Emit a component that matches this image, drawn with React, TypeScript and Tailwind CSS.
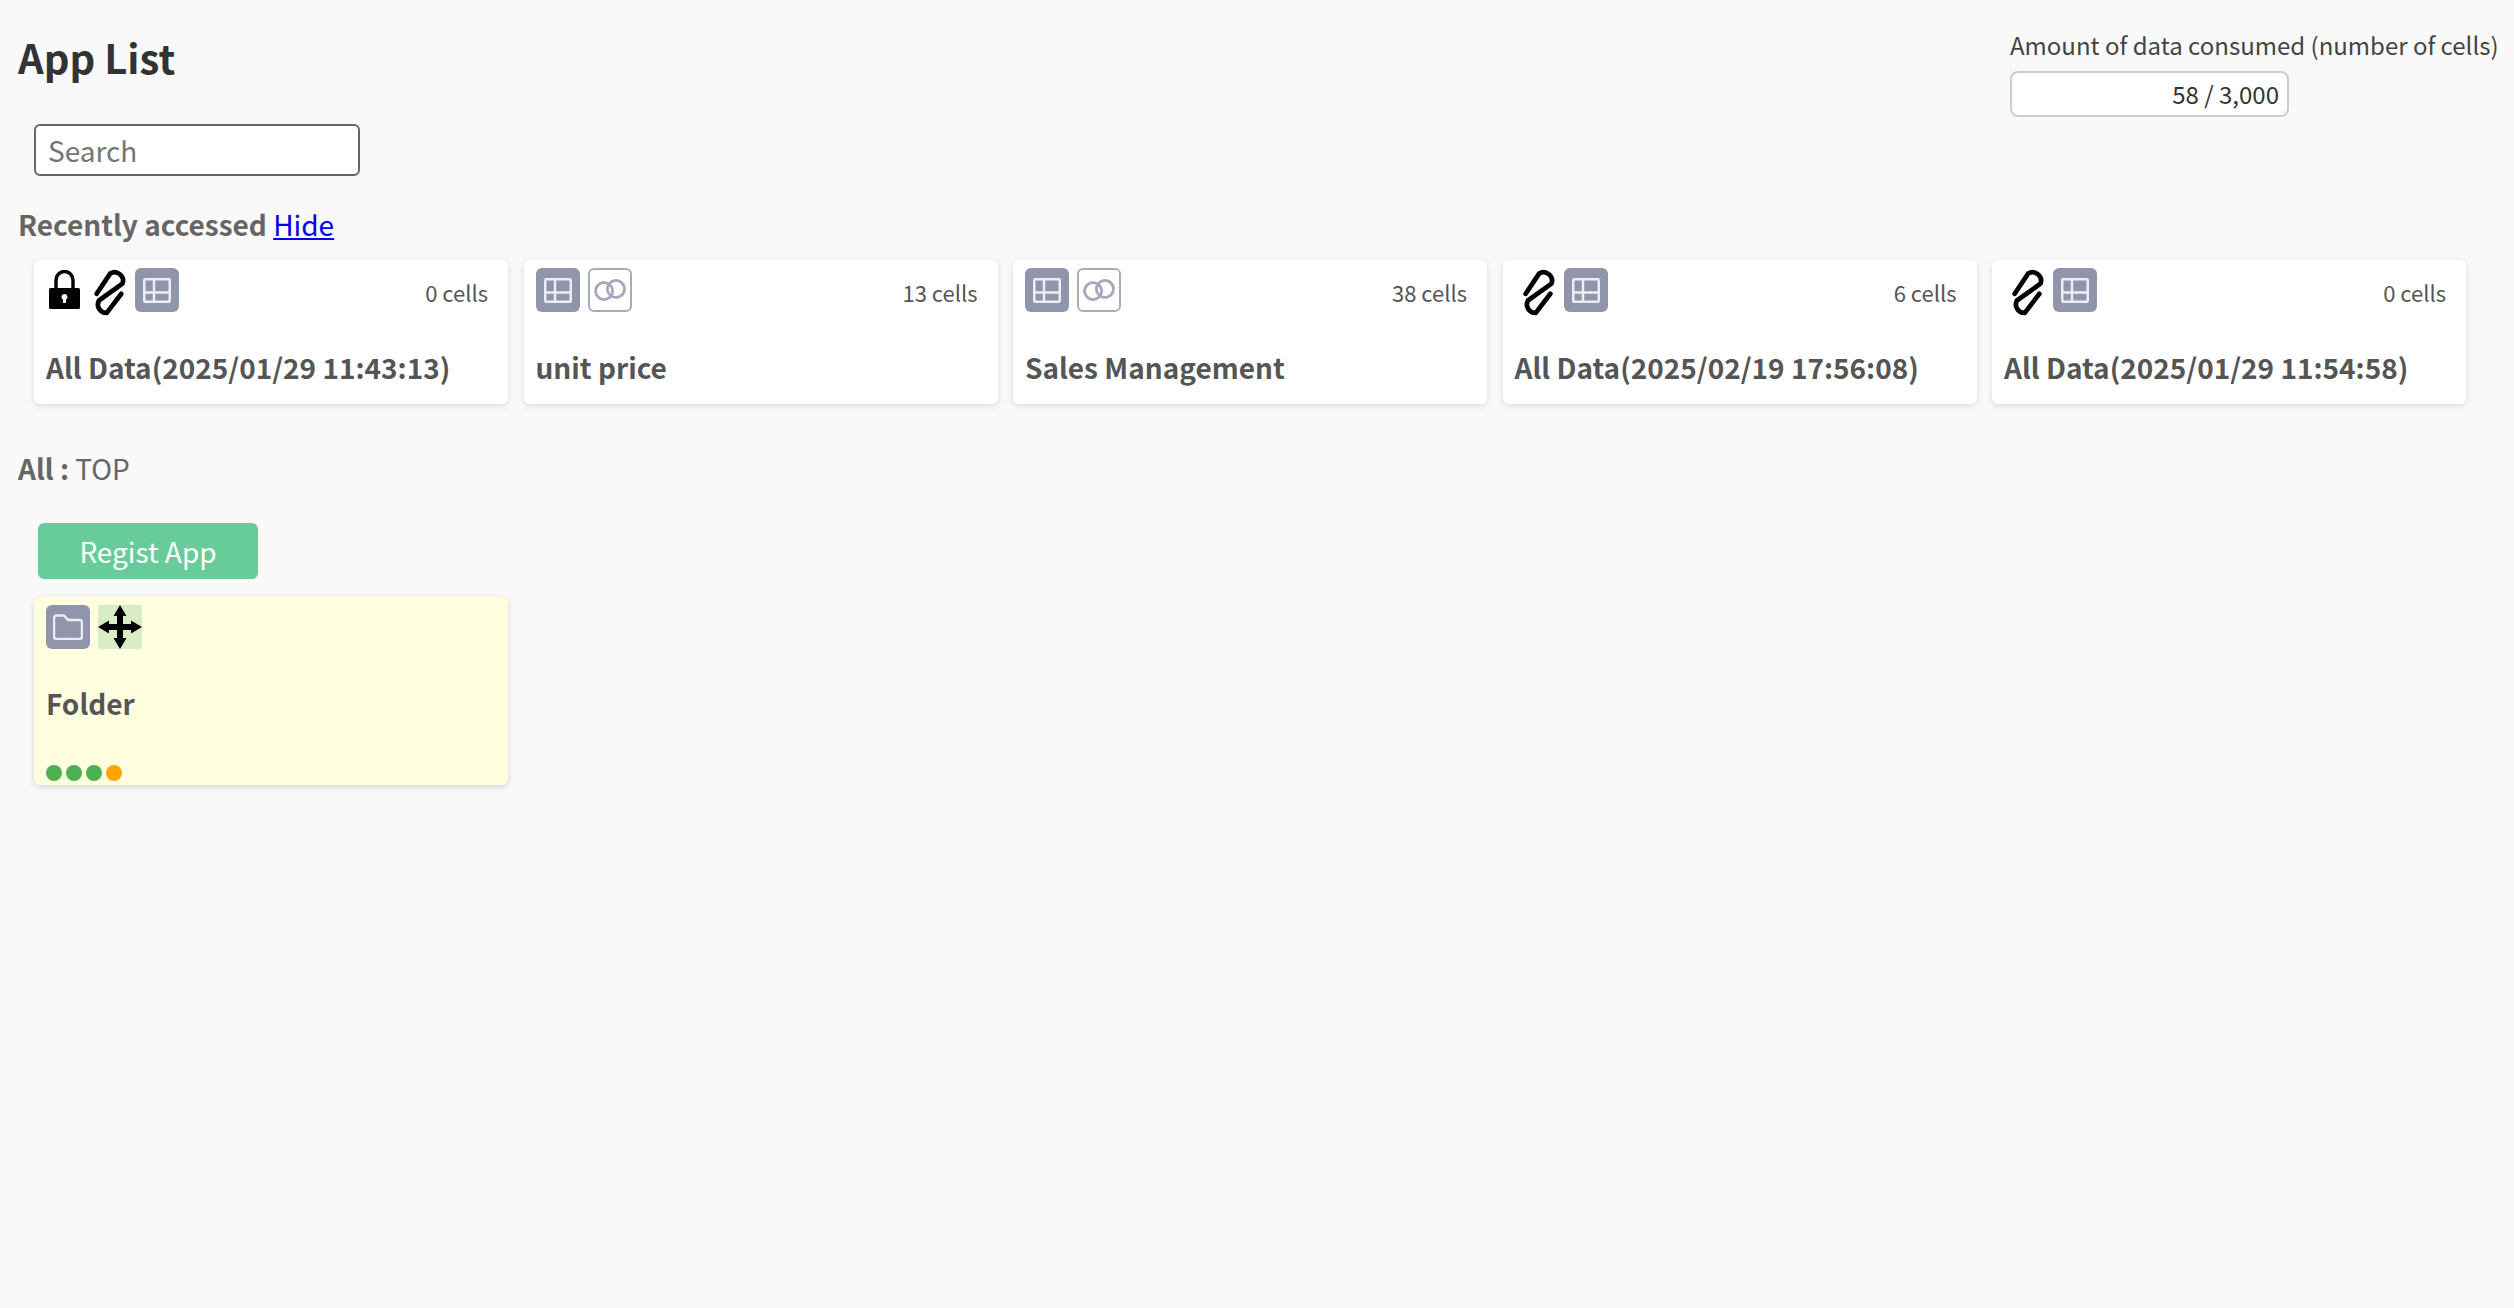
const font = { fontFamily: '"Noto Sans CJK JP", "Noto Sans", sans-serif' };

function Lock() {
  return (
    <svg width="31" height="39" viewBox="0 0 31 39" className="mt-[2px] ml-[3px] mr-[6px] shrink-0">
      <path d="M7 19V10a8.500 8.500 0 0 1 17 0v9" fill="none" stroke="#000" strokeWidth="3.400" />
      <path fillRule="evenodd" d="M1.500 18h28a1.500 1.500 0 0 1 1.500 1.500v18a1.500 1.500 0 0 1-1.500 1.500h-28A1.500 1.500 0 0 1 0 37.500v-18A1.500 1.500 0 0 1 1.500 18zM15.500 24a3 3 0 0 0-1.500 5.600V33h3v-3.400A3 3 0 0 0 15.500 24z" fill="#000" />
    </svg>
  );
}

function Clip() {
  return (
    <svg width="34" height="46" viewBox="9.500 8 29 41" className="ml-[6px] mr-[9px] shrink-0 overflow-visible" fill="none" stroke="#000" strokeWidth="4.200" strokeLinecap="round" strokeLinejoin="round">
      <path d="M13 31 25 13A7.500 7.500 0 0 1 36 22L15 37A7.500 7.500 0 0 0 22 48L35 31" />
    </svg>
  );
}

function TableIcon() {
  return (
    <div className="w-[44px] h-[44px] rounded-[6px] bg-[#9195ab] flex items-center justify-center shrink-0">
      <svg width="28" height="25" viewBox="0 0 28 25" fill="none" stroke="#eceef4" strokeWidth="2.500">
        <rect x="1.250" y="1.250" width="25.500" height="22.500" rx="1" />
        <path d="M11 1v23M1 14.500h26" />
      </svg>
    </div>
  );
}

function Rings() {
  return (
    <div className="ml-[8px] w-[44px] h-[44px] rounded-[6px] border-2 border-[#a9acbc] bg-white flex items-center justify-center shrink-0">
      <svg width="32" height="22" viewBox="0 0 32 22" fill="none" stroke="#a5a8b9" strokeWidth="2.800">
        <g transform="rotate(-10 16 11)">
          <circle cx="10" cy="11" r="8.500" />
          <circle cx="22" cy="11" r="8.500" />
        </g>
      </svg>
    </div>
  );
}

function FolderIcon() {
  return (
    <div className="w-[44px] h-[44px] rounded-[6px] bg-[#9195ab] flex items-center justify-center shrink-0">
      <svg width="30" height="26" viewBox="0 0 30 26" fill="none" stroke="#eceef4" strokeWidth="2.400" strokeLinejoin="round">
        <path d="M3.500 1.500h7.500l4 4.500h11.500A2.500 2.500 0 0 1 29 8.500v14a2.500 2.500 0 0 1-2.500 2.500h-23A2.500 2.500 0 0 1 1 22.500V4a2.500 2.500 0 0 1 2.500-2.500z" />
      </svg>
    </div>
  );
}

function MoveIcon() {
  return (
    <div className="ml-[8px] w-[44px] h-[44px] bg-[#d9ecc8] shrink-0">
      <svg width="44" height="44" viewBox="0 0 44 44" fill="#000">
        <path d="M22 0 28.500 11H25V19H33V15.500L44 22 33 28.500V25H25V33H28.500L22 44 15.500 33H19V25H11V28.500L0 22 11 15.500V19H19V11H15.500Z" />
      </svg>
    </div>
  );
}

type CardData = { title: string; cells: string; lock?: boolean; clip?: boolean; rings?: boolean };

const cards: CardData[] = [
  { title: "All Data(2025/01/29 11:43:13)", cells: "0 cells", lock: true, clip: true },
  { title: "unit price", cells: "13 cells", rings: true },
  { title: "Sales Management", cells: "38 cells", rings: true },
  { title: "All Data(2025/02/19 17:56:08)", cells: "6 cells", clip: true },
  { title: "All Data(2025/01/29 11:54:58)", cells: "0 cells", clip: true },
];

function Card({ c }: { c: CardData }) {
  return (
    <div className="w-[474px] h-[144px] shrink-0 bg-white rounded-[6px] shadow-[0_2px_6px_rgba(0,0,0,0.12)] px-[12px] pt-[8px]">
      <div className="flex items-start h-[44px]">
        {c.lock && <Lock />}
        {c.clip && <Clip />}
        <TableIcon />
        {c.rings && <Rings />}
        <div className="ml-auto mr-[8px] mt-[9px] text-[22px] leading-[30px] text-[#555]">{c.cells}</div>
      </div>
      <div className="mt-[33px] text-[28px] leading-[44px] font-bold text-[#555] whitespace-nowrap">{c.title}</div>
    </div>
  );
}

export default function App() {
  return (
    <div className="min-h-[1308px] bg-[#f9f9f9] overflow-hidden" style={font}>
      <div className="flex justify-between pl-[18px] pr-[18px]">
        <h1 className="mt-[27px] text-[40px] leading-[60px] font-bold text-[#333]">App List</h1>
        <div className="pt-[27px] w-[486px] shrink-0">
          <div className="text-[24px] leading-[36px] text-[#444] whitespace-nowrap">Amount of data consumed (number of cells)</div>
          <div className="mt-[8px] w-[279px] h-[46px] rounded-[8px] border-2 border-[#ccc] bg-white pr-[8px] text-right text-[24px] leading-[42px] text-[#333]">58 / 3,000</div>
        </div>
      </div>

      <div className="mt-[7px] ml-[34px] w-[326px] h-[52px] rounded-[6px] border-2 border-[#666] bg-white px-[12px] text-[28px] leading-[48px] text-[#757575]">Search</div>

      <div className="mt-[26px] ml-[18px] text-[28px] leading-[44px] text-[#666]">
        <span className="font-bold">Recently accessed</span>{" "}
        <a href="#" className="text-[#0000ee] underline">Hide</a>
      </div>

      <div className="mt-[14px] ml-[34px] flex gap-[15.500px]">
        {cards.map((c, i) => <Card key={i} c={c} />)}
      </div>

      <div className="mt-[42px] ml-[18px] text-[28px] leading-[44px] text-[#666]">
        <span className="font-bold">All :</span> TOP
      </div>

      <button className="block mt-[33px] ml-[38px] w-[220px] h-[56px] rounded-[6px] bg-[#68cc9a] text-white text-[28px] leading-[54px] text-center">Regist App</button>

      <div className="mt-[18px] ml-[34px] w-[474px] h-[188px] bg-[#ffffe0] rounded-[6px] shadow-[0_2px_6px_rgba(0,0,0,0.15)] px-[12px] pt-[8px] flex flex-col">
        <div className="flex">
          <FolderIcon />
          <MoveIcon />
        </div>
        <div className="mt-[32px] text-[28px] leading-[44px] font-bold text-[#555]">Folder</div>
        <div className="mt-auto mb-[4px] flex gap-[4px]">
          <span className="w-[16px] h-[16px] rounded-full bg-[#4caf50]" />
          <span className="w-[16px] h-[16px] rounded-full bg-[#4caf50]" />
          <span className="w-[16px] h-[16px] rounded-full bg-[#4caf50]" />
          <span className="w-[16px] h-[16px] rounded-full bg-[#ffa500]" />
        </div>
      </div>
    </div>
  );
}
